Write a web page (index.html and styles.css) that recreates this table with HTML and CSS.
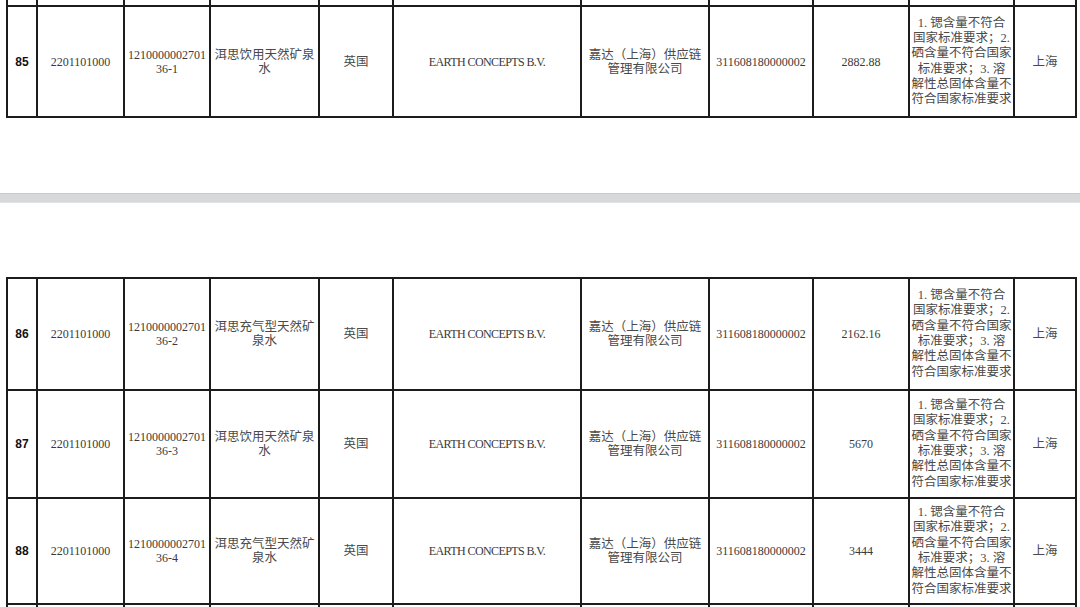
FILE: index.html
```html
<!DOCTYPE html>
<html lang="zh-CN">
<head>
<meta charset="utf-8">
<title>不合格产品清单</title>
<link rel="stylesheet" href="styles.css">
</head>
<body>
<div class="viewer">
  <section class="page page-a">
    <table class="grid">
      <colgroup>
        <col class="c-no"><col class="c-hs"><col class="c-id"><col class="c-name"><col class="c-origin"><col class="c-maker"><col class="c-importer"><col class="c-code"><col class="c-qty"><col class="c-reason"><col class="c-port">
      </colgroup>
      <tr class="stub">
        <td></td><td></td><td></td><td></td><td></td><td></td><td></td><td></td><td></td><td></td><td></td>
      </tr>
      <tr class="row r85">
        <td class="no">85</td>
        <td>2201101000</td>
        <td>1210000002701<br>36-1</td>
        <td class="cjk">洱思饮用天然矿泉<br>水</td>
        <td class="cjk">英国</td>
        <td class="latin">EARTH CONCEPTS B.V.</td>
        <td class="cjk">嘉达（上海）供应链<br>管理有限公司</td>
        <td>311608180000002</td>
        <td>2882.88</td>
        <td class="cjk reason">1. 锶含量不符合<br>国家标准要求；2.<br>硒含量不符合国家<br>标准要求；3. 溶<br>解性总固体含量不<br>符合国家标准要求</td>
        <td class="cjk">上海</td>
      </tr>
    </table>
  </section>
  <div class="page-gap"></div>
  <section class="page page-b">
    <table class="grid">
      <colgroup>
        <col class="c-no"><col class="c-hs"><col class="c-id"><col class="c-name"><col class="c-origin"><col class="c-maker"><col class="c-importer"><col class="c-code"><col class="c-qty"><col class="c-reason"><col class="c-port">
      </colgroup>
      <tr class="row r86">
        <td class="no">86</td>
        <td>2201101000</td>
        <td>1210000002701<br>36-2</td>
        <td class="cjk">洱思充气型天然矿<br>泉水</td>
        <td class="cjk">英国</td>
        <td class="latin">EARTH CONCEPTS B.V.</td>
        <td class="cjk">嘉达（上海）供应链<br>管理有限公司</td>
        <td>311608180000002</td>
        <td>2162.16</td>
        <td class="cjk reason">1. 锶含量不符合<br>国家标准要求；2.<br>硒含量不符合国家<br>标准要求；3. 溶<br>解性总固体含量不<br>符合国家标准要求</td>
        <td class="cjk">上海</td>
      </tr>
      <tr class="row r87">
        <td class="no">87</td>
        <td>2201101000</td>
        <td>1210000002701<br>36-3</td>
        <td class="cjk">洱思饮用天然矿泉<br>水</td>
        <td class="cjk">英国</td>
        <td class="latin">EARTH CONCEPTS B.V.</td>
        <td class="cjk">嘉达（上海）供应链<br>管理有限公司</td>
        <td>311608180000002</td>
        <td>5670</td>
        <td class="cjk reason">1. 锶含量不符合<br>国家标准要求；2.<br>硒含量不符合国家<br>标准要求；3. 溶<br>解性总固体含量不<br>符合国家标准要求</td>
        <td class="cjk">上海</td>
      </tr>
      <tr class="row r88">
        <td class="no">88</td>
        <td>2201101000</td>
        <td>1210000002701<br>36-4</td>
        <td class="cjk">洱思充气型天然矿<br>泉水</td>
        <td class="cjk">英国</td>
        <td class="latin">EARTH CONCEPTS B.V.</td>
        <td class="cjk">嘉达（上海）供应链<br>管理有限公司</td>
        <td>311608180000002</td>
        <td>3444</td>
        <td class="cjk reason">1. 锶含量不符合<br>国家标准要求；2.<br>硒含量不符合国家<br>标准要求；3. 溶<br>解性总固体含量不<br>符合国家标准要求</td>
        <td class="cjk">上海</td>
      </tr>
      <tr class="row r89">
        <td></td><td></td><td></td><td></td><td></td><td></td><td></td><td></td><td></td><td></td><td></td>
      </tr>
    </table>
  </section>
</div>
</body>
</html>
```

FILE: styles.css
```css
html, body {
  margin: 0;
  padding: 0;
  background: #ffffff;
}

.viewer {
  width: 1080px;
  height: 607px;
  overflow: hidden;
  background: #ffffff;
}

.page {
  background: #ffffff;
}

.page-a {
  height: 193px;
}

.page-gap {
  height: 10px;
  box-sizing: border-box;
  background: #d7d8da;
  border-top: 1px solid #c9cacd;
  border-bottom: 1px solid #e2e3e5;
}

.page-b {
  padding-top: 74px;
}

.grid {
  margin-left: 6px;
  border-collapse: collapse;
  table-layout: fixed;
  width: 1069px;
  font-family: "Liberation Serif", "Noto Sans CJK SC", serif;
  font-size: 12px;
  line-height: 14px;
  color: #3a3a3a;
}

.grid td {
  border: 2px solid #1c1c1c;
  padding: 0 2px;
  text-align: center;
  vertical-align: middle;
  overflow: hidden;
  white-space: nowrap;
}

.c-no { width: 30px; }
.c-hs { width: 87px; }
.c-id { width: 86px; }
.c-name { width: 109px; }
.c-origin { width: 74px; }
.c-maker { width: 188px; }
.c-importer { width: 128px; }
.c-code { width: 104px; }
.c-qty { width: 96px; }
.c-reason { width: 105px; }
.c-port { width: 62px; }

.stub td {
  border-top: none;
  height: 5px;
  padding: 0;
}

.r85 td { height: 109px; }
.r86 td { height: 110px; }
.r87 td { height: 106px; }
.r88 td { height: 104px; }
.r89 td { height: 40px; }

.grid td.no {
  font-family: "Liberation Sans", Arial, sans-serif;
  font-weight: bold;
  font-size: 12px;
  color: #111111;
}

.grid td.cjk {
  font-size: 12.5px;
  line-height: 14px;
  color: #4a4a4a;
}

.grid td.latin {
  font-size: 12px;
  letter-spacing: -0.6px;
}

.grid td.reason {
  line-height: 15.3px;
  padding: 0 1px;
}
```
